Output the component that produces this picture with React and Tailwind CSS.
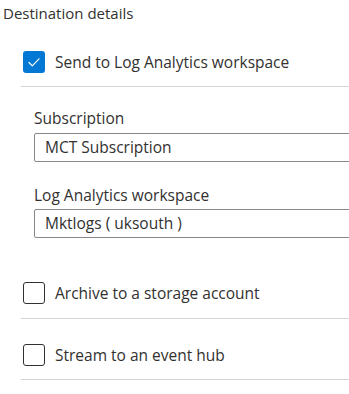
import React from "react";

const Check = ({ checked }) =>
  checked ? (
    <span className="flex h-[22px] w-[22px] shrink-0 items-center justify-center rounded-[3px] bg-[#0078d4]">
      <svg width="14" height="14" viewBox="0 0 14 14" fill="none">
        <path d="M2 7.5 L5.3 10.8 L12 3.8" stroke="white" strokeWidth="1.2" strokeLinecap="round" strokeLinejoin="round" />
      </svg>
    </span>
  ) : (
    <span className="block h-[22px] w-[22px] shrink-0 rounded-[3px] border border-[#323130] bg-white" />
  );

const Row = ({ checked, label, className = "" }) => (
  <div className={`flex items-center gap-[10px] border-b border-[#d6d4d2] pl-[2px] ${className}`}>
    <Check checked={checked} />
    <span className="leading-[22px]">{label}</span>
  </div>
);

export default function App() {
  return (
    <div
      className="h-[394px] w-[349px] overflow-hidden bg-white text-[15.5px] text-[#323130]"
      style={{ fontFamily: '"Open Sans", "Noto Sans", sans-serif' }}
    >
      <div className="pl-[3px] pt-[2px] text-[15px] leading-[22px]">Destination details</div>

      <div className="ml-[21px] mt-[27px]">
        <Row checked label="Send to Log Analytics workspace" className="pb-[13px]" />

        <div className="pl-[13px]">
          <div className="mt-[21px] leading-[20px]">Subscription</div>
          <div className="mt-[5px] flex h-[29px] w-[340px] items-center rounded-[2px] border border-[#8a8886] pl-[10px]">
            MCT Subscription
          </div>
          <div className="mt-[23px] leading-[20px]">Log Analytics workspace</div>
          <div className="mt-[4px] flex h-[29px] w-[340px] items-center rounded-[2px] border border-[#8a8886] pl-[10px]">
            Mktlogs ( uksouth )
          </div>
        </div>

        <Row label="Archive to a storage account" className="mt-[44px] pb-[14px]" />
        <Row label="Stream to an event hub" className="pt-[25px] pb-[13px]" />
      </div>
    </div>
  );
}
